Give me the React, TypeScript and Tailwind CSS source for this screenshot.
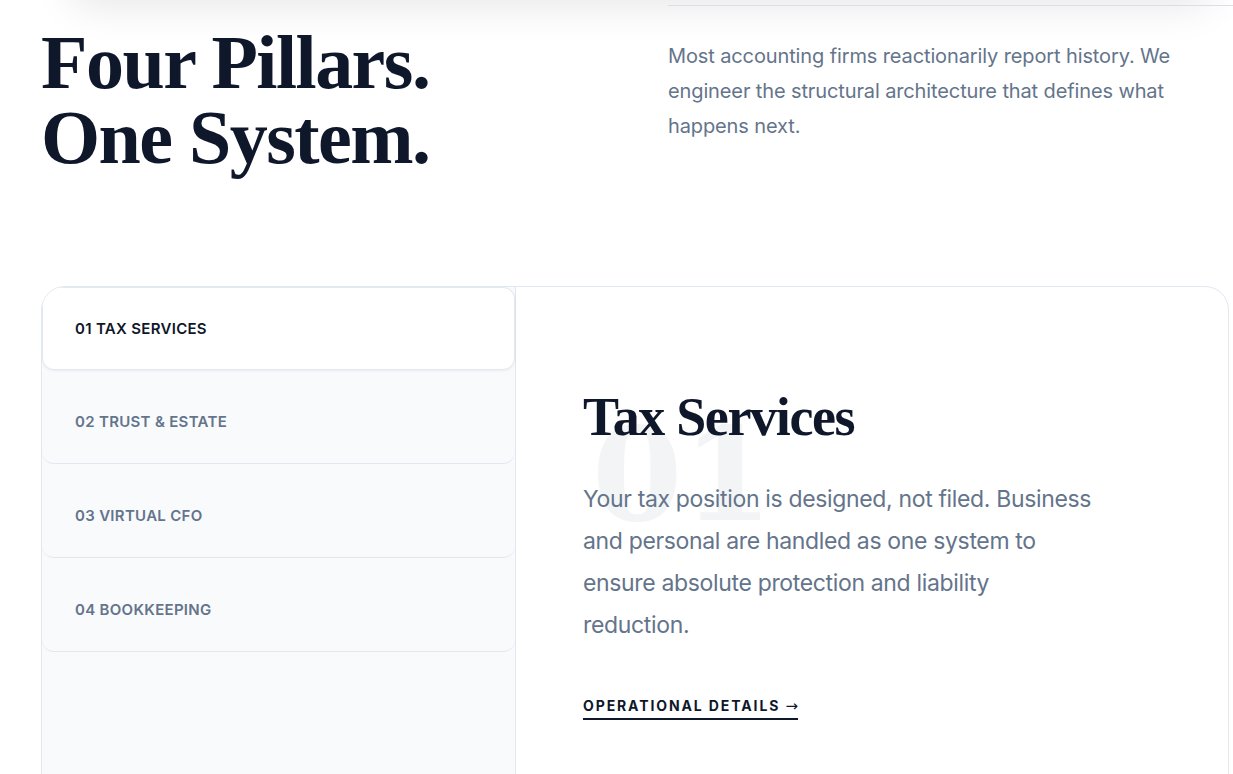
import { useState } from "react"

const pillars = [
  { id: "01", label: "Tax Services" },
  { id: "02", label: "Trust & Estate" },
  { id: "03", label: "Virtual CFO" },
  { id: "04", label: "Bookkeeping" },
]

export default function App() {
  const [active, setActive] = useState(0)

  return (
    <div className="relative min-h-screen overflow-hidden bg-white font-['Inter',sans-serif]">
      {/* shadow of the card scrolled above */}
      <div className="absolute -top-[70px] left-[70px] right-[20px] h-[70px] rounded-3xl bg-white shadow-[0_6px_40px_rgba(0,0,0,0.10)]" />

      <section className="relative pl-[41px] pt-[5px]">
        <div className="grid grid-cols-[627px_1fr] items-start">
          <h1 className="mt-[20px] font-['Liberation_Serif',serif] text-[76px] font-bold leading-[75px] tracking-[-0.02em] text-[#0f172a]">
            Four Pillars.
            <br />
            One System.
          </h1>
          <div className="border-t border-[#d9dee8] pt-[33px]">
            <p className="max-w-[525px] text-[20px] leading-[35px] tracking-[-0.006em] text-[#64748b]">
              Most accounting firms reactionarily report history. We engineer the structural architecture that defines
              what happens next.
            </p>
          </div>
        </div>

        <div className="mr-[4px] mt-[111px] flex h-[540px] overflow-hidden rounded-3xl border border-[#e2e8f0] bg-white">
          <div className="flex w-[474px] shrink-0 flex-col border-r border-[#e2e8f0] bg-[#f8fafc]">
            {pillars.map((p, i) =>
              i === active ? (
                <button
                  key={p.id}
                  onClick={() => setActive(i)}
                  className="flex h-[83px] items-start rounded-xl border border-[#e2e8f0] bg-white pl-[32px] pt-[31px] text-left text-[15px] font-semibold uppercase leading-[20px] tracking-[0.02em] text-[#0f172a] shadow-[0_1px_3px_rgba(15,23,42,0.06)]"
                >
                  {p.id} {p.label}
                </button>
              ) : (
                <button
                  key={p.id}
                  onClick={() => setActive(i)}
                  className="flex h-[94px] items-start rounded-b-xl border-b border-[#e2e8f0] pl-[33px] pt-[42px] text-left text-[15px] font-semibold uppercase leading-[20px] tracking-[0.02em] text-[#64748b]"
                >
                  {p.id} {p.label}
                </button>
              )
            )}
          </div>

          <div className="flex-1 pl-[67px] pt-[101px]">
            <div className="relative">
              <span className="absolute left-[9px] top-[22px] select-none font-['DejaVu_Serif',serif] text-[130px] font-bold leading-none text-[#f3f4f6]">
                {pillars[active].id}
              </span>
              <h2 className="relative font-['Liberation_Serif',serif] text-[54px] font-bold leading-[59px] tracking-[-0.025em] text-[#0f172a]">
                {pillars[active].label}
              </h2>
              <p className="relative mt-[31px] max-w-[513px] text-[23px] leading-[42px] tracking-[-0.015em] text-[#64748b]">
                Your tax position is designed, not filed. Business and personal are handled as one system to ensure
                absolute protection and liability reduction.
              </p>
              <a
                href="#"
                className="relative mt-[50px] inline-block border-b-2 border-[#0f172a] pb-[2px] text-[14px] font-bold uppercase leading-[20px] tracking-[0.135em] text-[#0f172a]"
              >
                Operational Details{" "}
                <span className="font-['DejaVu_Sans',sans-serif] text-[15px] font-normal tracking-normal">→</span>
              </a>
            </div>
          </div>
        </div>
      </section>
    </div>
  )
}
